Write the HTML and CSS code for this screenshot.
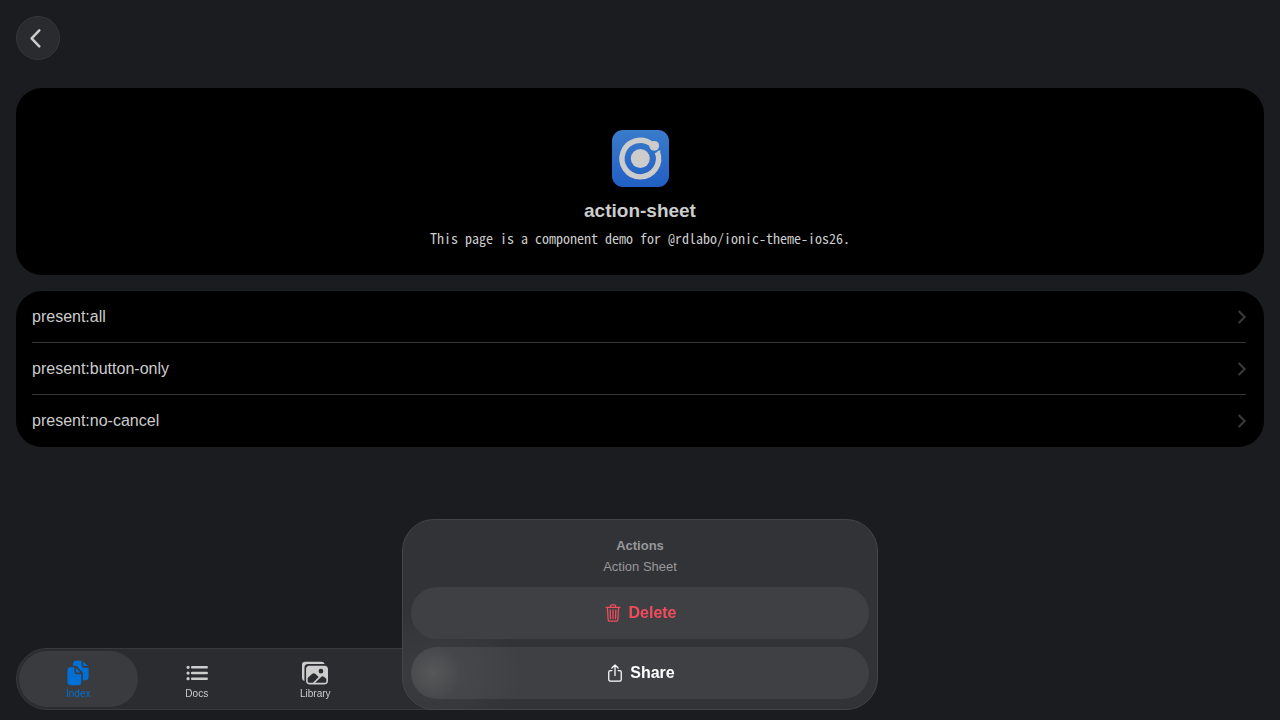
FILE: index.html
```html
<!DOCTYPE html>
<html lang="en">
<head>
<meta charset="utf-8">
<meta name="viewport" content="width=device-width, initial-scale=1">
<title>action-sheet</title>
<link rel="stylesheet" href="styles.css">
</head>
<body>
<header class="toolbar">
  <button class="back" type="button" aria-label="Back">
    <svg viewBox="0 0 24 24" width="24" height="24"><path d="M14.3 4.4 6.6 12.4l7.7 8" fill="none" stroke="currentColor" stroke-width="2.5" stroke-linecap="round" stroke-linejoin="round"/></svg>
  </button>
</header>
<main class="content">
  <section class="hero">
    <svg class="logo" viewBox="0 0 57 57" aria-hidden="true">
      <defs><linearGradient id="blue" x1="0" y1="0" x2="0" y2="1"><stop offset="0" stop-color="#3a7bcb"/><stop offset="1" stop-color="#215fc4"/></linearGradient></defs>
      <rect width="57" height="57" rx="11" fill="url(#blue)"/>
      <circle cx="28.3" cy="28.5" r="9.5" fill="#ccc"/>
      <path d="M40 14.5A18.3 18.3 0 1 0 45.4 22.1" fill="none" stroke="#ccc" stroke-width="5.4"/>
      <path d="M44 24.5 49 21 46 20Z" fill="#ccc"/>
      <circle cx="42.2" cy="15.8" r="6.4" fill="#3474ca" clip-path="inset(5px 0 0 7px)"/>
      <circle cx="42.2" cy="15.8" r="4.9" fill="#ccc"/>
    </svg>
    <h1 class="hero-title">action-sheet</h1>
    <p class="hero-text">This page is a component demo for @rdlabo/ionic-theme-ios26.</p>
  </section>
  <section class="list">
    <button class="item" type="button"><span class="item-inner"><span>present:all</span><svg class="chevron" viewBox="0 0 8 14"><path d="m.7 1 6 6-6 6"/></svg></span></button>
    <button class="item" type="button"><span class="item-inner"><span>present:button-only</span><svg class="chevron" viewBox="0 0 8 14"><path d="m.7 1 6 6-6 6"/></svg></span></button>
    <button class="item" type="button"><span class="item-inner"><span>present:no-cancel</span><svg class="chevron" viewBox="0 0 8 14"><path d="m.7 1 6 6-6 6"/></svg></span></button>
  </section>
</main>
<nav class="tabs" aria-label="Main">
  <a class="tab tab-active" href="#index" aria-current="page">
    <svg class="tab-icon" viewBox="0 0 512 512" fill="currentColor"><path d="M298.39 248a4 4 0 002.86-6.8l-78.4-79.72a4 4 0 00-6.85 2.81V236a12 12 0 0012 12z"/><path d="M197 267a43.67 43.67 0 01-13-31v-92h-72a64.19 64.19 0 00-64 64v224a64 64 0 0064 64h144a64 64 0 0064-64V280h-92a43.61 43.61 0 01-31-13zM372 120h70.39a4 4 0 002.86-6.8l-78.4-79.72a4 4 0 00-6.85 2.81V108a12 12 0 0012 12z"/><path d="M372 152a44.34 44.34 0 01-44-44V16H220a60.07 60.07 0 00-60 60v36h42.12A40.81 40.81 0 01231 124.14l109.16 111a41.11 41.11 0 0111.83 29V400h53.05c32.51 0 58.95-26.92 58.95-60V152z"/></svg>
    <span>Index</span>
  </a>
  <a class="tab" href="#docs">
    <svg class="tab-icon" viewBox="0 0 512 512" fill="none" stroke="currentColor" stroke-linecap="round" stroke-width="48"><path d="M160 144h288M160 256h288M160 368h288"/><g fill="currentColor" stroke-width="32"><circle cx="80" cy="144" r="16"/><circle cx="80" cy="256" r="16"/><circle cx="80" cy="368" r="16"/></g></svg>
    <span>Docs</span>
  </a>
  <a class="tab" href="#library">
    <svg class="tab-icon" viewBox="0 0 512 512" fill="currentColor"><path d="M450.29 112H142c-34 0-62 27.51-62 61.33v245.34c0 33.82 28 61.33 62 61.33h308c34 0 62-26.18 62-60V173.33c0-33.82-27.68-61.33-61.71-61.33zm-77.15 61.34a46 46 0 11-46.28 46 46.19 46.19 0 0146.28-46.01zm-231.55 276c-17 0-29.86-13.75-29.86-30.66v-64.83l90.46-80.79a46.54 46.54 0 0163.44 1.83L328.27 337l-113 112.33zM480 418.67a30.67 30.67 0 01-30.71 30.66H259L376.08 333a46.24 46.24 0 0159.44-.16L480 370.59z"/><path d="M384 32H64A64 64 0 000 96v256a64.11 64.11 0 0048 62V152a72 72 0 0172-72h326a64.11 64.11 0 00-62-48z"/></svg>
    <span>Library</span>
  </a>
</nav>
<div class="sheet" role="dialog" aria-labelledby="sheet-title">
  <div class="sheet-header">
    <h2 class="sheet-title" id="sheet-title">Actions</h2>
    <p class="sheet-sub">Action Sheet</p>
  </div>
  <button class="action action-delete" type="button">
    <svg class="action-icon" viewBox="0 0 512 512" fill="none" stroke="currentColor" stroke-linecap="round" stroke-linejoin="round" stroke-width="32"><path d="M112 112l20 320c.95 18.49 14.4 32 32 32h184c17.67 0 30.87-13.51 32-32l20-320M80 112h352M192 112V72a23.93 23.93 0 0124-24h80a23.93 23.93 0 0124 24v40M256 176v224M184 176l8 224M328 176l-8 224"/></svg>
    <span>Delete</span>
  </button>
  <button class="action" type="button">
    <svg class="action-icon" viewBox="0 0 512 512" fill="none" stroke="currentColor" stroke-linecap="round" stroke-linejoin="round" stroke-width="32"><path d="M336 192h40a40 40 0 0140 40v192a40 40 0 01-40 40H136a40 40 0 01-40-40V232a40 40 0 0140-40h40M336 128l-80-80-80 80M256 321V48"/></svg>
    <span>Share</span>
  </button>
</div>
</body>
</html>
```
FILE: styles.css
```css
* {
  box-sizing: border-box;
}

body {
  margin: 0;
  min-height: 100vh;
  background: #1b1c1f;
  color: #ccc;
  font-family: "Liberation Sans", Arial, sans-serif;
  font-size: 16px;
}

button {
  border: 0;
  padding: 0;
  background: none;
  color: inherit;
  font: inherit;
}

h1, h2, p {
  margin: 0;
}

.toolbar {
  display: flex;
  padding: 16px 16px 0;
}

.back {
  display: flex;
  align-items: center;
  justify-content: center;
  width: 44px;
  height: 44px;
  padding-right: 3px;
  border: 1px solid #353639;
  border-radius: 50%;
  background: #2a2b2e;
}

.content {
  display: flex;
  flex-direction: column;
  gap: 16px;
  padding: 28px 16px 0;
}

.hero {
  display: flex;
  flex-direction: column;
  align-items: center;
  padding: 42px 16px 26px;
  border-radius: 26px;
  background: #000;
  text-align: center;
}

.logo {
  width: 57px;
  height: 57px;
}

.hero-title {
  margin-top: 12px;
  font-size: 19px;
  line-height: 24px;
}

.hero-text {
  margin-top: 4px;
  font-family: "Noto Sans Mono CJK JP", "Noto Sans CJK JP", monospace;
  font-size: 14px;
  line-height: 22px;
}

.list {
  border-radius: 26px;
  background: #000;
}

.item {
  display: block;
  width: 100%;
  height: 52px;
  padding: 0 18px 0 16px;
  text-align: left;
}

.item-inner {
  display: flex;
  align-items: center;
  justify-content: space-between;
  height: 52px;
  border-bottom: 1px solid #363636;
}

.item:last-child .item-inner {
  border-bottom-color: transparent;
}

.chevron {
  width: 8px;
  height: 14px;
  overflow: visible;
  fill: none;
  stroke: #3b3b3b;
  stroke-width: 2;
}

.tabs {
  position: fixed;
  bottom: 10px;
  left: 16px;
  display: flex;
  width: 480px;
  height: 62px;
  padding: 2px;
  border: 1px solid #38393b;
  border-radius: 31px;
  background: #2b2c2f;
}

.tab {
  display: flex;
  flex-direction: column;
  align-items: center;
  width: 25%;
  padding-top: 9px;
  border-radius: 28px;
  color: #ccc;
  font-size: 10px;
  line-height: 16px;
  text-decoration: none;
}

.tab-active {
  background: #3a3b3e;
  color: #0070d6;
}

.tab-icon {
  width: 26px;
  height: 26px;
}

.sheet {
  position: fixed;
  bottom: 10px;
  left: 50%;
  display: flex;
  flex-direction: column;
  gap: 8px;
  width: 476px;
  max-width: 100%;
  padding: 15px 8px 10px;
  border: 1px solid #444547;
  border-radius: 32px;
  background:
    radial-gradient(ellipse 86px 70px at 32px 154px, rgba(70, 73, 73, 0.5), transparent),
    #323337;
  transform: translateX(-50%);
}

.sheet-header {
  padding-bottom: 2px;
  color: #98989a;
  font-size: 13px;
  line-height: 21px;
  text-align: center;
}

.sheet-title {
  font-size: 13px;
}

.action {
  display: flex;
  align-items: center;
  justify-content: center;
  gap: 5px;
  height: 52px;
  border-radius: 26px;
  background: #3f4044;
  color: #fff;
  font-weight: 700;
}

.action:last-child {
  background:
    radial-gradient(circle 28px at 22px 26px, rgba(89, 90, 91, 0.8), transparent),
    radial-gradient(ellipse 90px 70px at 22px 26px, rgba(74, 78, 79, 0.8), transparent),
    #3f4044;
}

.action-delete {
  color: #f24c5a;
}

.action-icon {
  width: 20px;
  height: 20px;
}
```
